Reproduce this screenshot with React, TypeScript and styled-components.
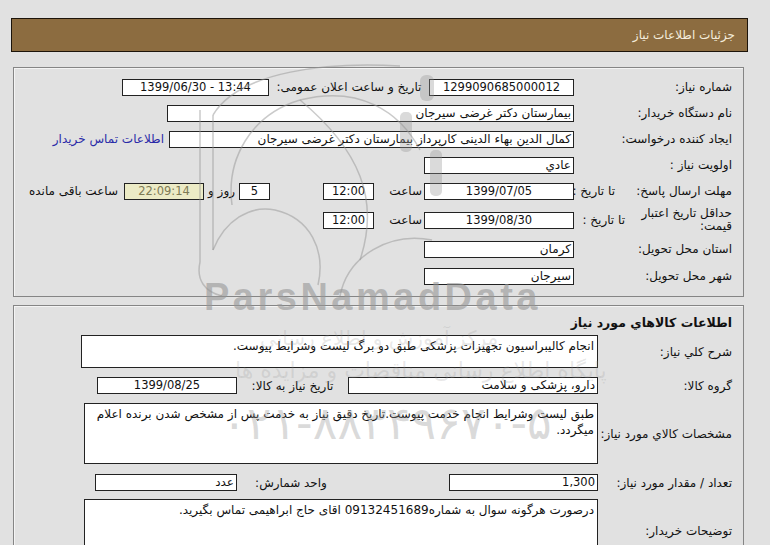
import * as React from "react";
import styled, { createGlobalStyle } from "styled-components";

const GlobalStyle = createGlobalStyle`
  html, body {
    margin: 0;
    padding: 0;
    background: #e1e1e1;
  }
  body {
    font-family: "DejaVu Sans", Tahoma, sans-serif;
    font-size: 12px;
    color: #111;
  }
`;

const Page = styled.div`
  position: relative;
  width: 770px;
  height: 545px;
  overflow: hidden;
  padding: 18px 0 0 11px;
  box-sizing: border-box;
`;

const Header = styled.div`
  width: 737px;
  height: 34px;
  box-sizing: border-box;
  background: #8c6c40;
  border: 1px solid #1c140a;
  direction: rtl;
  display: flex;
  align-items: center;
  padding-right: 12px;
  color: #f4ecdc;
  font-size: 12px;
`;

const Section = styled.div<{ $top: number; $h: number }>`
  margin: ${(p) => p.$top}px 0 0 2px;
  width: 731px;
  height: ${(p) => p.$h}px;
  box-sizing: border-box;
  border: 1px solid #858585;
  box-shadow: inset 1px 1px 0 #f4f4f4;
  direction: rtl;
  padding: 6px 11px 0 0;
`;

const Row = styled.div<{ $h?: number; $mt?: number; $top?: boolean }>`
  display: flex;
  align-items: ${(p) => (p.$top ? "flex-start" : "center")};
  height: ${(p) => p.$h ?? 26}px;
  margin-top: ${(p) => p.$mt ?? 0}px;
`;

const Label = styled.div<{ $w?: number; $mt?: number }>`
  width: ${(p) => p.$w ?? 158}px;
  flex: none;
  margin-top: ${(p) => p.$mt ?? 0}px;
  text-align: right;
  white-space: nowrap;
`;

const WrapLabel = styled.div<{ $w: number }>`
  width: ${(p) => p.$w}px;
  flex: none;
  text-align: right;
  line-height: 13px;
`;

const Cell = styled.div<{ $w: number; $mr?: number; $pr?: number; $align?: string }>`
  width: ${(p) => p.$w}px;
  flex: none;
  box-sizing: border-box;
  margin-right: ${(p) => p.$mr ?? 0}px;
  padding-right: ${(p) => p.$pr ?? 0}px;
  text-align: ${(p) => p.$align ?? "center"};
  white-space: nowrap;
`;

const Box = styled.div<{
  $w: number;
  $h?: number;
  $align?: string;
  $mr?: number;
  $yellow?: boolean;
}>`
  width: ${(p) => p.$w}px;
  height: ${(p) => p.$h ?? 17}px;
  flex: none;
  box-sizing: border-box;
  border: 1px solid #222;
  background: ${(p) => (p.$yellow ? "#ecebc6" : "#fff")};
  color: ${(p) => (p.$yellow ? "#7d7a55" : "#111")};
  margin-right: ${(p) => p.$mr ?? 0}px;
  text-align: ${(p) => p.$align ?? "right"};
  padding: 0 2px;
  line-height: 15px;
  white-space: nowrap;
  overflow: hidden;
`;

const Num = styled.span`
  display: inline-block;
  direction: ltr;
  unicode-bidi: isolate;
  font-size: 11.5px;
`;

const Area = styled.div<{ $w: number; $h: number }>`
  width: ${(p) => p.$w}px;
  height: ${(p) => p.$h}px;
  flex: none;
  box-sizing: border-box;
  border: 1px solid #222;
  background: #fff;
  padding: 2px 3px;
  line-height: 16px;
  text-align: right;
  overflow: hidden;
`;

const Link = styled.a`
  color: #2a2aa8;
  text-decoration: none;
  margin-right: 5px;
  white-space: nowrap;
`;

const Title = styled.div`
  font-weight: bold;
  font-size: 12.5px;
  height: 22px;
  line-height: 22px;
  text-align: right;
`;

const Watermark = styled.div`
  position: absolute;
  left: 0;
  top: 0;
  width: 770px;
  height: 545px;
  pointer-events: none;
`;

const WmBrand = styled.div`
  position: absolute;
  left: 204px;
  top: 276px;
  font-family: "Liberation Sans", Arial, sans-serif;
  font-weight: bold;
  font-size: 38px;
  color: rgba(150, 150, 150, 0.6);
  letter-spacing: 3.5px;
`;

const WmLine = styled.div<{ $top: number; $left: number; $size: number; $a: number }>`
  position: absolute;
  left: ${(p) => p.$left}px;
  top: ${(p) => p.$top}px;
  font-size: ${(p) => p.$size}px;
  color: rgba(150, 150, 150, ${(p) => p.$a});
  white-space: nowrap;
  direction: rtl;
`;

const WaterLogo = () => (
  <svg
    width="770"
    height="545"
    viewBox="0 0 770 545"
    style={{ position: "absolute", left: 0, top: 0 }}
  >
    <g fill="none" stroke="rgba(150,150,150,0.5)" strokeWidth="1.5">
      <path d="M200 110 L200 262 C196 280 205 292 222 296 M213 115 L213 250" />
      <path d="M213 115 C240 70 330 62 400 66" />
      <path d="M213 250 C225 220 250 205 275 210 C310 218 326 250 318 285" />
      <path d="M232 205 C226 160 250 115 300 100 C360 85 400 112 420 150" />
      <path d="M300 100 C360 150 380 200 360 260" />
      <path d="M340 296 C348 255 390 232 432 240" />
    </g>
    <g fill="rgba(150,150,150,0.35)">
      <rect x="420" y="75" width="14" height="26" rx="6" />
      <rect x="400" y="112" width="12" height="40" rx="5" />
      <rect x="430" y="150" width="12" height="46" rx="5" />
    </g>
  </svg>
);

export default function App() {
  return (
    <Page>
      <GlobalStyle />
      <Header>جزئیات اطلاعات نیاز</Header>

      <Section $top={15} $h={230}>
        <Row>
          <Label>شماره نیاز:</Label>
          <Box $w={145} $align="center">
            <Num>1299090685000012</Num>
          </Box>
          <Cell $w={160}>تاریخ و ساعت اعلان عمومی:</Cell>
          <Box $w={147} $align="center">
            <Num>1399/06/30 - 13:44</Num>
          </Box>
        </Row>
        <Row>
          <Label>نام دستگاه خریدار:</Label>
          <Box $w={407}>بیمارستان دکتر غرضی سیرجان</Box>
        </Row>
        <Row>
          <Label>ایجاد کننده درخواست:</Label>
          <Box $w={405}>کمال الدین بهاء الدینی کارپرداز بیمارستان دکتر غرضی سیرجان</Box>
          <Link href="#">اطلاعات تماس خریدار</Link>
        </Row>
        <Row>
          <Label>اولویت نیاز :</Label>
          <Box $w={150}>عادي</Box>
        </Row>
        <Row>
          <Label $w={117}>مهلت ارسال پاسخ:</Label>
          <Cell $w={41} $align="right">
            تا تاریخ :
          </Cell>
          <Box $w={150} $align="center">
            <Num>1399/07/05</Num>
          </Box>
          <Cell $w={38} $mr={2} $align="right">
            ساعت
          </Cell>
          <Box $w={51} $mr={10} $align="center">
            <Num>12:00</Num>
          </Box>
          <Box $w={31} $mr={53} $align="center">
            <Num>5</Num>
          </Box>
          <Cell $w={27} $mr={4} $align="right">
            روز و
          </Cell>
          <Box $w={80} $mr={4} $align="center" $yellow>
            <Num>22:09:14</Num>
          </Box>
          <Cell $w={96} $mr={6} $align="right">
            ساعت باقی مانده
          </Cell>
        </Row>
        <Row $h={32}>
          <WrapLabel $w={92}>حداقل تاریخ اعتبار قیمت:</WrapLabel>
          <Cell $w={66} $pr={15} $align="right">
            تا تاریخ :
          </Cell>
          <Box $w={150} $align="center">
            <Num>1399/08/30</Num>
          </Box>
          <Cell $w={38} $mr={2} $align="right">
            ساعت
          </Cell>
          <Box $w={51} $mr={10} $align="center">
            <Num>12:00</Num>
          </Box>
        </Row>
        <Row>
          <Label>استان محل تحویل:</Label>
          <Box $w={150}>کرمان</Box>
        </Row>
        <Row $h={28}>
          <Label>شهر محل تحویل:</Label>
          <Box $w={150}>سیرجان</Box>
        </Row>
      </Section>

      <Section $top={8} $h={260}>
        <Title>اطلاعات کالاهاي مورد نیاز</Title>
        <Row $h={33} $mt={1}>
          <Label $w={134}>شرح کلي نیاز:</Label>
          <Area $w={517} $h={33}>
            انجام کالیبراسیون تجهیزات پزشکی طبق دو برگ لیست وشرایط پیوست.
          </Area>
        </Row>
        <Row $h={17} $mt={9}>
          <Label $w={134}>گروه کالا:</Label>
          <Box $w={250}>دارو، پزشکی و سلامت</Box>
          <Cell $w={111}>تاریخ نیاز به کالا:</Cell>
          <Box $w={140} $align="center">
            <Num>1399/08/25</Num>
          </Box>
        </Row>
        <Row $h={61} $mt={9}>
          <Label $w={134}>مشخصات کالاي مورد نیاز:</Label>
          <Area $w={514} $h={61}>
            طبق لیست وشرایط انجام خدمت پیوست.تاریخ دقیق نیاز به خدمت پس از مشخص شدن برنده اعلام
            میگردد.
          </Area>
        </Row>
        <Row $h={17} $mt={10}>
          <Label $w={134}>تعداد / مقدار مورد نیاز:</Label>
          <Box $w={149}>
            <Num>1,300</Num>
          </Box>
          <Cell $w={108} $mr={104}>
            واحد شمارش:
          </Cell>
          <Box $w={142}>عدد</Box>
        </Row>
        <Row $h={64} $mt={8} $top>
          <Label $w={134} $mt={25}>
            توضیحات خریدار:
          </Label>
          <Area $w={514} $h={64}>
            درصورت هرگونه سوال به شماره09132451689 اقای حاج ابراهیمی تماس بگیرید.
          </Area>
        </Row>
      </Section>

      <Watermark>
        <WaterLogo />
        <WmBrand>ParsNamadData</WmBrand>
        <WmLine $top={326} $left={260} $size={20} $a={0.22}>
          مرکز آموزش و اطلاع رسانی
        </WmLine>
        <WmLine $top={358} $left={235} $size={22} $a={0.22}>
          پایگاه اطلاع رسانی مناقصات و مزایده ها
        </WmLine>
        <WmLine $top={396} $left={222} $size={46} $a={0.35}>
          ۰۲۱-۸۸۳۴۹۶۷۰-۵
        </WmLine>
      </Watermark>
    </Page>
  );
}
